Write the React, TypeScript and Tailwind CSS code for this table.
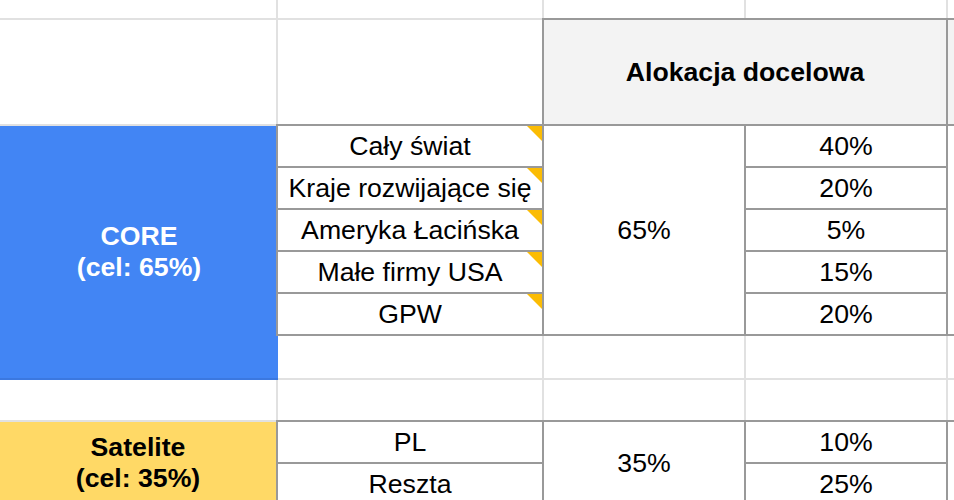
const font = { fontFamily: '"Liberation Sans", Arial, sans-serif' };

const core = [
  { name: "Cały świat", pct: "40%" },
  { name: "Kraje rozwijające się", pct: "20%" },
  { name: "Ameryka Łacińska", pct: "5%" },
  { name: "Małe firmy USA", pct: "15%" },
  { name: "GPW", pct: "20%" },
];

const cell = "bg-white flex items-center justify-center leading-none";
const boxed = "outline-2 outline-[#999999]";

export default function App() {
  return (
    <div className="w-[954px] h-[500px] overflow-hidden bg-white" style={font}>
      <div className="grid grid-cols-[276px_264px_200px_200px_1fr] grid-rows-[18px_104px_40px_40px_40px_40px_40px_42px_40px_40px_40px] gap-[2px] bg-[#e1e1e1] text-[26.67px] text-black">
        {/* row 1 */}
        <div className="bg-white col-start-1 row-start-1" />
        <div className="bg-white col-start-2 row-start-1" />
        <div className="bg-white col-start-3 row-start-1" />
        <div className="bg-white col-start-4 row-start-1" />
        <div className="bg-white col-start-5 row-start-1" />

        {/* row 2 */}
        <div className="bg-white col-start-1 row-start-2" />
        <div className="bg-white col-start-2 row-start-2" />
        <div className={`col-start-3 col-span-2 row-start-2 bg-[#f3f3f3] flex items-center justify-center font-bold leading-none ${boxed}`}>
          Alokacja docelowa
        </div>
        <div className={`col-start-5 row-start-2 bg-[#f3f3f3] ${boxed}`} />

        {/* CORE */}
        <div className="col-start-1 row-start-3 row-span-6 mr-[-2px] mb-[-2px] bg-[#4285f4] border-b-2 border-[#3b78e0] flex flex-col items-center justify-center text-white font-bold leading-[30.67px] text-center">
          <span>CORE</span>
          <span>(cel: 65%)</span>
        </div>

        {core.map((row, i) => (
          <div
            key={row.name}
            className={`relative col-start-2 ${cell} ${boxed}`}
            style={{ gridRowStart: i + 3 }}
          >
            {row.name}
            <div className="absolute top-0 right-0 w-0 h-0 border-t-[15px] border-l-[15px] border-t-[#fbbc04] border-l-transparent" />
          </div>
        ))}

        <div className={`col-start-3 row-start-3 row-span-5 ${cell} ${boxed}`}>65%</div>

        {core.map((row, i) => (
          <div
            key={row.pct + i}
            className={`col-start-4 ${cell} ${boxed}`}
            style={{ gridRowStart: i + 3 }}
          >
            {row.pct}
          </div>
        ))}

        <div className={`col-start-5 row-start-3 row-span-5 bg-white ${boxed}`} />

        {/* row 8 */}
        <div className="bg-white col-start-2 row-start-8" />
        <div className="bg-white col-start-3 row-start-8" />
        <div className="bg-white col-start-4 row-start-8" />
        <div className="bg-white col-start-5 row-start-8" />

        {/* row 9 */}
        <div className="bg-white col-start-1 row-start-9" />
        <div className="bg-white col-start-2 row-start-9" />
        <div className="bg-white col-start-3 row-start-9" />
        <div className="bg-white col-start-4 row-start-9" />
        <div className="bg-white col-start-5 row-start-9" />

        {/* Satelite */}
        <div className="col-start-1 row-start-10 row-span-2 bg-[#ffd966] flex flex-col items-center justify-center font-bold leading-[30.67px] text-center">
          <span>Satelite</span>
          <span>(cel: 35%)</span>
        </div>

        <div className={`col-start-2 row-start-10 ${cell} ${boxed}`}>PL</div>
        <div className={`col-start-2 row-start-11 ${cell} ${boxed}`}>Reszta</div>
        <div className={`col-start-3 row-start-10 row-span-2 ${cell} ${boxed}`}>35%</div>
        <div className={`col-start-4 row-start-10 ${cell} ${boxed}`}>10%</div>
        <div className={`col-start-4 row-start-11 ${cell} ${boxed}`}>25%</div>
        <div className={`col-start-5 row-start-10 row-span-2 bg-white ${boxed}`} />
      </div>
    </div>
  );
}
